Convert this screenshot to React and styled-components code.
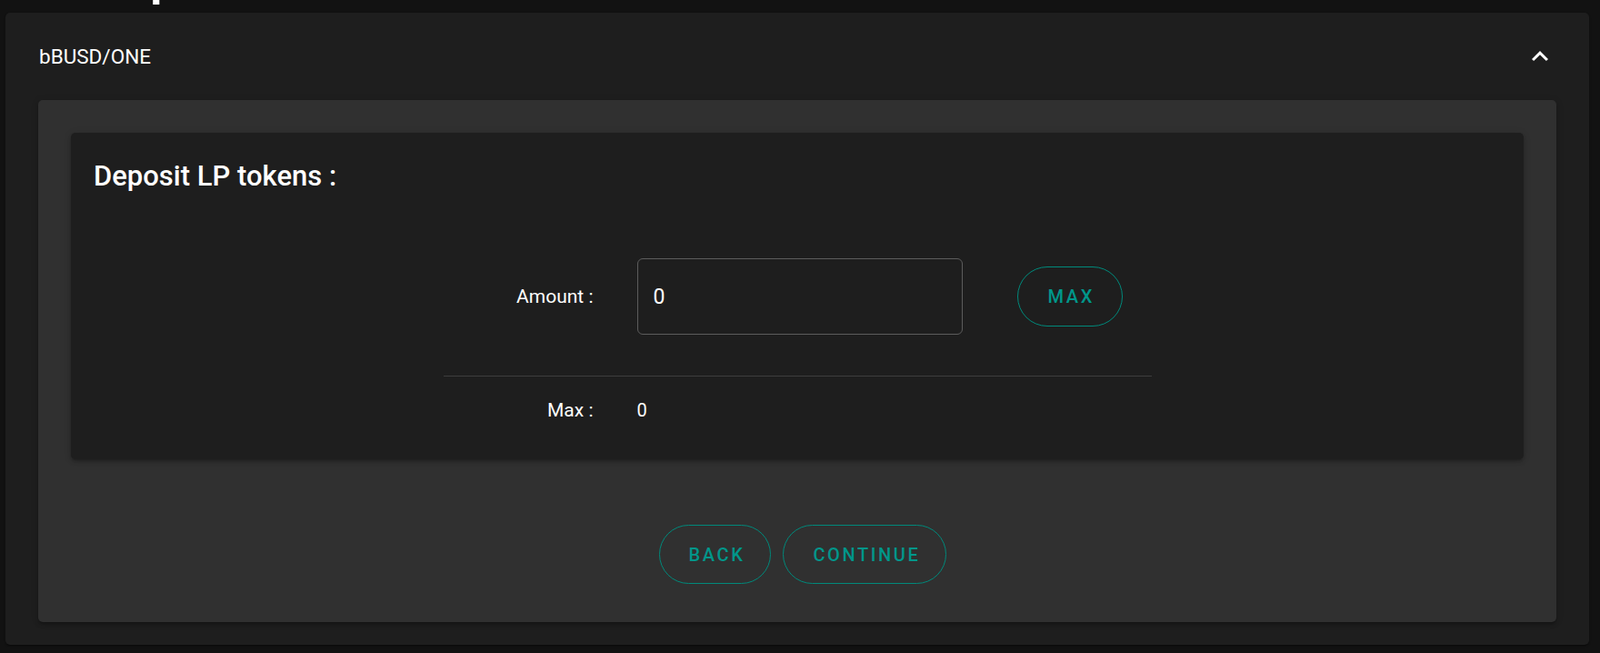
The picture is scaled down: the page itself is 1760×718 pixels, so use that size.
import styled, { createGlobalStyle } from "styled-components";

const GlobalStyle = createGlobalStyle`
  body {
    margin: 0;
    background-color: #121212;
    font-family: Roboto, "Liberation Sans", sans-serif;
    color: #ffffff;
  }
`;

const Page = styled.div`
  padding: 0 12px 10px 6px;
`;

const TitleStrip = styled.div`
  height: 14px;
  overflow: hidden;
  display: flex;
  align-items: flex-end;
  padding-left: 100px;
`;

const PageTitle = styled.h1`
  margin: 0 0 11px 0;
  font-size: 50px;
  font-weight: 700;
  line-height: 1;
`;

const Accordion = styled.div`
  background-color: #1e1e1e;
  border-radius: 5px;
  box-shadow: 0 2px 1px -1px rgba(0, 0, 0, 0.2), 0 1px 1px rgba(0, 0, 0, 0.14),
    0 1px 3px rgba(0, 0, 0, 0.12);
`;

const Summary = styled.div`
  height: 96px;
  display: flex;
  align-items: center;
  justify-content: space-between;
  padding: 0 36px 0 37px;
  font-size: 22.5px;
  cursor: pointer;
`;

const Details = styled.div`
  padding: 0 36px 25px 36px;
`;

const Panel = styled.div`
  background-color: #303030;
  border-radius: 5px;
  padding: 36px 36px 42px 36px;
  box-shadow: 0 3px 3px -2px rgba(0, 0, 0, 0.2), 0 3px 4px rgba(0, 0, 0, 0.14),
    0 1px 8px rgba(0, 0, 0, 0.12);
`;

const Card = styled.div`
  background-color: #1e1e1e;
  border-radius: 5px;
  padding: 25px 25px 38px 25px;
  box-shadow: 0 3px 3px -2px rgba(0, 0, 0, 0.2), 0 3px 4px rgba(0, 0, 0, 0.14),
    0 1px 8px rgba(0, 0, 0, 0.12);
`;

const CardTitle = styled.h2`
  margin: 0;
  font-size: 31px;
  font-weight: 500;
  line-height: 45px;
`;

const Form = styled.div`
  width: 779px;
  margin: 68px auto 0 auto;
`;

const Row = styled.div`
  display: grid;
  grid-template-columns: 165px 358px 117px;
  column-gap: 48px;
  align-items: center;
  padding-bottom: ${(p) => (p.$top ? "45px" : "0")};
  border-bottom: ${(p) => (p.$top ? "1px solid #3d3d3d" : "none")};
  margin-top: ${(p) => (p.$top ? "0" : "21px")};
  height: ${(p) => (p.$top ? "auto" : "32px")};
`;

const Label = styled.div`
  text-align: right;
  font-size: 21px;
`;

const Value = styled.div`
  font-size: 20px;
`;

const Input = styled.input`
  box-sizing: border-box;
  width: 358px;
  height: 84px;
  background: transparent;
  border: 1px solid #5c5c5c;
  border-radius: 6px;
  color: #ffffff;
  font-family: Roboto, "Liberation Sans", sans-serif;
  font-size: 23px;
  padding: 0 17px;
  outline: none;
`;

const OutlineButton = styled.button`
  box-sizing: border-box;
  height: ${(p) => p.$h || 65}px;
  padding: 0 ${(p) => p.$pr || 28}px 0 ${(p) => p.$pl || 32}px;
  background: transparent;
  border: 1px solid #00897b;
  border-radius: 40px;
  color: #00968a;
  font-family: Roboto, "Liberation Sans", sans-serif;
  font-size: 20px;
  font-weight: 500;
  letter-spacing: 2.6px;
  text-transform: uppercase;
  cursor: pointer;
`;

const MaxCell = styled.div`
  margin-left: 12px;
`;

const Actions = styled.div`
  display: flex;
  justify-content: center;
  gap: 13px;
  margin-top: 72px;
  padding-left: 12px;
`;

const Chevron = () => (
  <svg width="36" height="36" viewBox="0 0 24 24" fill="#ffffff">
    <path d="M12 8l-6 6 1.41 1.41L12 10.83l4.59 4.58L18 14z" />
  </svg>
);

const App = () => {
  return (
    <>
      <GlobalStyle />
      <Page>
        <TitleStrip>
          <PageTitle>Deposit</PageTitle>
        </TitleStrip>
        <Accordion>
          <Summary>
            <span>bBUSD/ONE</span>
            <Chevron />
          </Summary>
          <Details>
            <Panel>
              <Card>
                <CardTitle>Deposit LP tokens :</CardTitle>
                <Form>
                  <Row $top>
                    <Label>Amount :</Label>
                    <Input defaultValue="0" />
                    <MaxCell>
                      <OutlineButton $h={66} $pl={33} $pr={30}>
                        Max
                      </OutlineButton>
                    </MaxCell>
                  </Row>
                  <Row>
                    <Label>Max :</Label>
                    <Value>0</Value>
                  </Row>
                </Form>
              </Card>
              <Actions>
                <OutlineButton>Back</OutlineButton>
                <OutlineButton>Continue</OutlineButton>
              </Actions>
            </Panel>
          </Details>
        </Accordion>
      </Page>
    </>
  );
};

export default App;
